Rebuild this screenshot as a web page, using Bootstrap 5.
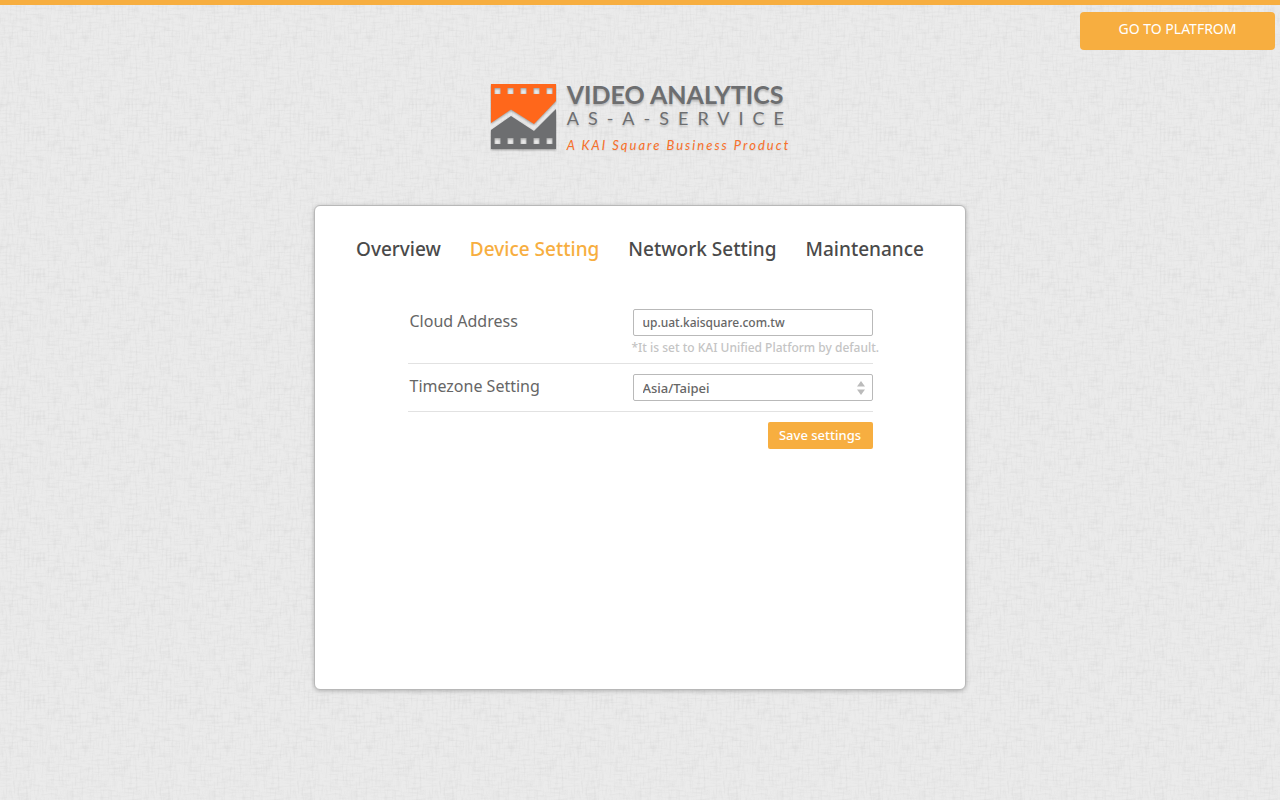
<!DOCTYPE html>
<html lang="en">
<head>
<meta charset="utf-8">
<meta name="viewport" content="width=device-width, initial-scale=1">
<title>Device Setting</title>
<link href="https://cdn.jsdelivr.net/npm/bootstrap@5.3.0/dist/css/bootstrap.min.css" rel="stylesheet">
<style>
  :root { --amber: #f7ae40; --slate: #6d6e70; }
  body {
    min-height: 100vh;
    font-family: "Noto Sans", "Open Sans", sans-serif;
    color: #666;
    border-top: 5px solid var(--amber);
    /* woven linen: one horizontal and one vertical thread layer */
    background: #ebebeb url("data:image/svg+xml,%3Csvg xmlns='http://www.w3.org/2000/svg' width='142' height='142'%3E%3Cfilter id='h' x='0' y='0' width='100%25' height='100%25'%3E%3CfeTurbulence type='fractalNoise' baseFrequency='.06 .5' numOctaves='3' seed='4' stitchTiles='stitch'/%3E%3CfeColorMatrix values='0 0 0 0 .5 0 0 0 0 .5 0 0 0 0 .5 .42 0 0 0 -.19'/%3E%3C/filter%3E%3Cfilter id='v' x='0' y='0' width='100%25' height='100%25'%3E%3CfeTurbulence type='fractalNoise' baseFrequency='.5 .06' numOctaves='3' seed='9' stitchTiles='stitch'/%3E%3CfeColorMatrix values='0 0 0 0 .5 0 0 0 0 .5 0 0 0 0 .5 .42 0 0 0 -.19'/%3E%3C/filter%3E%3Crect width='142' height='142' filter='url(%23h)'/%3E%3Crect width='142' height='142' filter='url(%23v)'/%3E%3C/svg%3E");
  }
  .btn-amber, .btn-amber:hover, .btn-amber:active {
    background: var(--amber) !important; color: #fff !important; border: 0; border-radius: 2px;
    font-size: 13px; line-height: 19px;
  }
  .btn-amber.platform-link { width: 195px; height: 38px; margin: 7px 5px 0 0; border-radius: 4px; padding: 7px 12px 12px; font-size: 14px; }
  .brand { gap: 10px; margin: 34px 0 51px; }
  .brand-mark { width: 67px; height: 70px; }
  .brand-text { font-family: Lato, sans-serif; color: var(--slate); text-shadow: 0 2px 2px rgba(0,0,0,.2); white-space: nowrap; }
  .brand-name { font-size: 25px; line-height: 20px; font-weight: 700; }
  .brand-sub { font-size: 18px; line-height: 28px; letter-spacing: 9px; margin-right: -9px; }
  .brand-tag { font-size: 13px; line-height: 16px; letter-spacing: 2px; font-style: italic; color: #f9702a; margin-top: 5px; text-shadow: 0 1px 1px rgba(0,0,0,.08); }
  .panel {
    max-width: 652px; min-height: 485px; background: #fff; border: 1px solid #b8b8b8;
    border-radius: 6px; box-shadow: 0 1px 4px rgba(0,0,0,.25); padding: 27px 41px;
  }
  .tabs { font-size: 19px; line-height: 32px; font-weight: 500; }
  .tabs a { color: #4a4a4a; text-decoration: none; }
  .tabs a.active { color: #f7ae40; }
  .settings { max-width: 465px; margin-top: 44px; }
  .setting { border-bottom: 1px solid #e2e2e2; padding-bottom: 10px; margin-bottom: 10px; }
  .setting label { font-size: 16px; line-height: 24px; padding-left: 2px; }
  .field { width: 240px; }
  .field .form-control, .field .form-select {
    height: 27px; padding: 2px 9px; border: 1px solid #b9b9b9; border-radius: 2px;
    font-size: 13px; line-height: 20px; font-weight: 500; color: #666; background-color: #fff;
  }
  .field .form-control { font-size: 12px; }
  .field .form-select {
    background-image: url("data:image/svg+xml,%3Csvg xmlns='http://www.w3.org/2000/svg' viewBox='0 0 8 14'%3E%3Cpath fill='%23bbb' d='M4 0l4 5.500H0zM4 14L0 8.500h8z'/%3E%3C/svg%3E");
    background-size: 8px 14px; background-position: right 7px center;
  }
  .hint { font-size: 12px; line-height: 16px; font-weight: 500; color: #c4c4c4; white-space: nowrap; margin: 4px 0 -3px -1px; }
  .save { height: 27px; padding: 4px 0; width: 105px; font-weight: 500; }
</style>
</head>
<body>
<header class="d-flex justify-content-end">
  <button type="button" class="btn btn-amber platform-link">GO TO PLATFROM</button>
</header>
<main class="container-fluid d-flex flex-column align-items-center">
  <div class="brand d-flex">
    <svg class="brand-mark flex-shrink-0" viewBox="0 0 67 70" role="img" aria-label="Film strip with chart">
      <g fill-rule="evenodd" style="filter:drop-shadow(0 1px 1px rgba(0,0,0,.35))">
        <path fill="#ff671b" d="M1 0h65v17L44 40 21 25.500 1 39zM4.500 4v6h6V4zm13 0v6h6V4zm13 0v6h6V4zm13 0v6h6V4zm13 0v6h6V4z"/>
        <path fill="#6d6e70" d="M1 46L21 32l23 15 22-22v40H1zM4.500 54v6h6v-6zm13 0v6h6v-6zm13 0v6h6v-6zm13 0v6h6v-6zm13 0v6h6v-6z"/>
      </g>
    </svg>
    <div class="brand-text">
      <div class="brand-name">VIDEO ANALYTICS</div>
      <div class="brand-sub">AS-A-SERVICE</div>
      <div class="brand-tag">A KAI Square Business Product</div>
    </div>
  </div>
  <section class="panel w-100">
    <nav class="tabs d-flex flex-wrap justify-content-between">
      <a href="#">Overview</a>
      <a href="#" class="active" aria-current="page">Device Setting</a>
      <a href="#">Network Setting</a>
      <a href="#">Maintenance</a>
    </nav>
    <form class="settings mx-auto">
      <div class="setting d-flex justify-content-between">
        <label for="cloud">Cloud Address</label>
        <div class="field">
          <input id="cloud" type="text" class="form-control" value="up.uat.kaisquare.com.tw">
          <div class="hint">*It is set to KAI Unified Platform by default.</div>
        </div>
      </div>
      <div class="setting d-flex justify-content-between">
        <label for="zone">Timezone Setting</label>
        <div class="field">
          <select id="zone" class="form-select"><option>Asia/Taipei</option></select>
        </div>
      </div>
      <div class="d-flex justify-content-end">
        <button type="button" class="btn btn-amber save">Save settings</button>
      </div>
    </form>
  </section>
</main>
<script src="https://cdn.jsdelivr.net/npm/bootstrap@5.3.0/dist/js/bootstrap.bundle.min.js"></script>
</body>
</html>
